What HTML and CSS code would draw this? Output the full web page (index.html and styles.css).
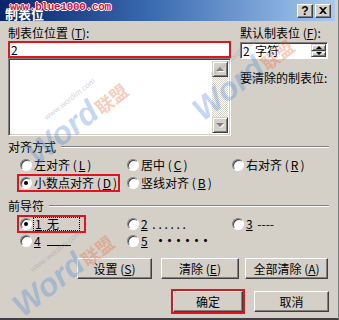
FILE: index.html
```html
<!DOCTYPE html>
<html>
<head>
    <title>制表位</title>
    <link rel="stylesheet" href="styles.css">
</head>
<body>
    <div class="window">
        <div class="titlebar">
            <span class="title">制表位</span>
            <span class="site">www.blue1000.com</span>
            <div class="caption">
                <span class="cbtn">?</span>
                <span class="cbtn">
                    <svg width="8" height="7" viewBox="0 0 8 7"><path d="M0 0h2l2 2 2-2h2L5 3.5 8 7H6L4 5 2 7H0l3-3.5z" fill="#000"/></svg>
                </span>
            </div>
        </div>

        <div class="content">
            <div class="top">
                <div class="col-left">
                    <div class="label">制表位位置 (<u>T</u>):</div>
                    <div class="field">2</div>
                    <div class="listbox">
                        <div class="scrollbar">
                            <span class="sbtn"><i class="arrow up"></i></span>
                            <span class="sbtn"><i class="arrow down"></i></span>
                        </div>
                    </div>
                </div>
                <div class="col-right">
                    <div class="label">默认制表位 (<u>F</u>):</div>
                    <div class="spin">
                        <span class="spin-text">2&nbsp; 字符</span>
                        <div class="spin-btns">
                            <span class="spin-btn"><i class="tiny up"></i></span>
                            <span class="spin-btn"><i class="tiny down"></i></span>
                        </div>
                    </div>
                    <div class="label clear-label">要清除的制表位:</div>
                </div>
            </div>

            <div class="group-head first"><span>对齐方式</span><i class="etch"></i></div>
            <div class="radios">
                <div class="radio"><span class="dot"></span>左对齐 (<u>L</u>)</div>
                <div class="radio"><span class="dot"></span>居中 (<u>C</u>)</div>
                <div class="radio"><span class="dot"></span>右对齐 (<u>R</u>)</div>
                <div class="radio marked"><span class="dot on"></span>小数点对齐 (<u>D</u>)</div>
                <div class="radio"><span class="dot"></span>竖线对齐 (<u>B</u>)</div>
            </div>

            <div class="group-head second"><span>前导符</span><i class="etch"></i></div>
            <div class="radios leaders">
                <div class="radio marked focus-item"><span class="dot on"></span><span class="focus"><u>1</u>&nbsp; 无</span></div>
                <div class="radio"><span class="dot"></span><u>2</u>&nbsp;. . . . . .</div>
                <div class="radio"><span class="dot"></span><u>3</u>&nbsp;----</div>
                <div class="radio"><span class="dot"></span><u>4</u>&nbsp;<span class="line"></span></div>
                <div class="radio"><span class="dot"></span><u>5</u>&nbsp;<b class="bold-dots">······</b></div>
            </div>

            <div class="btn-row">
                <span class="btn set">设置 (<u>S</u>)</span>
                <span class="btn clear">清除 (<u>E</u>)</span>
                <span class="btn clear-all">全部清除 (<u>A</u>)</span>
            </div>

            <div class="btn-row ok-row">
                <span class="btn ok">确定</span>
                <span class="btn cancel">取消</span>
            </div>
        </div>

        <!-- watermarks over the dialog -->
        <div class="wm wm1"><div class="wm-url">www.wordlm.com</div><span class="wm-word">Word</span><span class="wm-cn">联盟</span></div>
        <div class="wm wm2"><div class="wm-url">www.wordlm.com</div><span class="wm-word">Word</span><span class="wm-cn">联盟</span></div>
        <div class="wm wm3"><div class="wm-url">www.wordlm.com</div><span class="wm-word">Word</span><span class="wm-cn">联盟</span></div>
    </div>
</body>
</html>
```

FILE: styles.css
```css
* {
    box-sizing: border-box;
}

body {
    margin: 0;
    font-family: "Noto Sans CJK SC", "DejaVu Sans", sans-serif;
    font-size: 12px;
    color: #000;
}

u {
    text-decoration: underline;
    text-underline-offset: 1px;
}

.window {
    position: relative;
    width: 339px;
    height: 320px;
    background: #d4d0c8;
    padding: 0 3px 0 0;
    border-bottom: 2px solid #404040;
    border-right: 1px solid #808080;
    overflow: hidden;
}

/* title bar */
.titlebar {
    position: relative;
    height: 21px;
    display: flex;
    align-items: center;
    padding: 0 4px 0 5px;
    background: linear-gradient(to right, #0a246a, #3a6ab0 45%, #a6caf0);
}

.title {
    color: #fff;
    font-weight: bold;
    font-size: 13px;
    line-height: 13px;
    margin-top: 5px;
    text-shadow: 0 0 1px #0a246a;
}

/* site stamp printed over the caption */
.site {
    position: absolute;
    left: 10px;
    top: 1px;
    font: bold 11px "Liberation Mono", monospace;
    letter-spacing: -0.3px;
    color: #e0103a;
    text-shadow: 1px 0 #fff, -1px 0 #fff, 0 1px #fff, 0 -1px #fff;
}

.caption {
    margin-left: auto;
    display: flex;
    gap: 2px;
}

.cbtn {
    width: 16px;
    height: 14px;
    background: #d4d0c8;
    border: 1px solid;
    border-color: #fff #404040 #404040 #fff;
    box-shadow: inset -1px -1px #808080;
    display: flex;
    align-items: center;
    justify-content: center;
    font: bold 12px "Liberation Sans", sans-serif;
    line-height: 12px;
}

/* main area */
.content {
    padding: 6px 6px 0 8px;
}

.label {
    line-height: 12px;
    height: 12px;
    white-space: nowrap;
}

.top {
    display: flex;
    gap: 9px;
}

.col-left {
    width: 223px;
}

.col-right {
    width: 88px;
}

.field {
    margin-top: 2px;
    height: 17px;
    border: 2px solid #e0141e;
    background: #fff;
    padding-left: 1px;
    line-height: 13px;
}

.listbox {
    height: 78px;
    background: #fff;
    border: 1px solid;
    border-color: #808080 #fff #fff #808080;
    box-shadow: inset 1px 1px #404040, inset -1px -1px #d4d0c8;
    padding: 2px;
    display: flex;
    justify-content: flex-end;
}

.scrollbar {
    width: 16px;
    display: flex;
    flex-direction: column;
    justify-content: space-between;
    background: repeating-conic-gradient(#d4d0c8 0 25%, #fff 0 50%) 0 0 / 2px 2px;
}

.sbtn, .spin-btn {
    background: #d4d0c8;
    border: 1px solid;
    border-color: #d4d0c8 #404040 #404040 #d4d0c8;
    box-shadow: inset 1px 1px #fff, inset -1px -1px #808080;
    display: flex;
    align-items: center;
    justify-content: center;
}

.sbtn {
    height: 16px;
}

.arrow, .tiny {
    width: 0;
    height: 0;
    border-left: 4px solid transparent;
    border-right: 4px solid transparent;
}

.arrow.up {
    border-bottom: 4px solid #808080;
    filter: drop-shadow(1px 1px #fff);
}

.arrow.down {
    border-top: 4px solid #808080;
    filter: drop-shadow(1px 1px #fff);
}

.spin {
    margin-top: 3px;
    height: 17px;
    background: #fff;
    border: 1px solid;
    border-color: #808080 #fff #fff #808080;
    box-shadow: inset 1px 1px #404040;
    display: flex;
    align-items: center;
    padding: 1px 1px 1px 2px;
}

.spin-text {
    flex: 1;
    line-height: 12px;
}

.spin-btns {
    width: 15px;
    height: 100%;
    display: flex;
    flex-direction: column;
}

.spin-btn {
    flex: 1;
}

.tiny {
    border-left-width: 3px;
    border-right-width: 3px;
}

.tiny.up {
    border-bottom: 3px solid #000;
}

.tiny.down {
    border-top: 3px solid #000;
}

.clear-label {
    margin-top: 13px;
}

/* groups */
.group-head {
    display: flex;
    align-items: center;
    gap: 5px;
    height: 12px;
    line-height: 12px;
}

.group-head.first {
    margin-top: 5px;
}

.group-head.second {
    margin-top: 11px;
}

.etch {
    flex: 1;
    height: 2px;
    border-top: 1px solid #808080;
    border-bottom: 1px solid #fff;
}

.radios {
    display: grid;
    grid-template-columns: 107px 105px 1fr;
    row-gap: 6px;
    margin-top: 6px;
    padding-left: 12px;
}

.radios.leaders {
    row-gap: 5px;
}

.radio {
    justify-self: start;
    display: flex;
    align-items: center;
    gap: 2px;
    height: 12px;
    line-height: 12px;
    white-space: nowrap;
}

.dot {
    width: 12px;
    height: 12px;
    flex: none;
    border-radius: 50%;
    background: #fff;
    border: 1px solid;
    border-color: #808080 #fff #fff #808080;
    box-shadow: inset 1px 1px #404040, 0 0 0 0.5px #d4d0c8;
    display: flex;
    align-items: center;
    justify-content: center;
}

.dot.on::after {
    content: "";
    width: 4px;
    height: 4px;
    border-radius: 50%;
    background: #000;
}

.marked {
    outline: 2px solid #e0141e;
    outline-offset: 1px;
}

.focus-item {
    gap: 1px;
    padding-right: 3px;
}

.focus {
    width: 47px;
    height: 14px;
    margin: -1px 0;
    border: 1px dotted #000;
    padding-left: 1px;
    line-height: 12px;
}

.line {
    display: inline-block;
    width: 24px;
    height: 9px;
    border-bottom: 1px solid #000;
}

.bold-dots {
    letter-spacing: -3px;
    font-weight: bold;
}

/* buttons */
.btn-row {
    display: flex;
    justify-content: flex-end;
    margin-top: 11px;
    padding-right: 1px;
}

.btn {
    height: 21px;
    background: #d4d0c8;
    border: 1px solid;
    border-color: #fff #404040 #404040 #fff;
    box-shadow: inset -1px -1px #808080;
    display: flex;
    align-items: center;
    justify-content: center;
    line-height: 12px;
}

.set {
    width: 75px;
    margin-right: 9px;
}

.clear {
    width: 78px;
    margin-right: 6px;
}

.clear-all {
    width: 83px;
}

.ok-row {
    margin-top: 12px;
    padding-right: 0;
}

.ok {
    width: 70px;
    margin-right: 11px;
    outline: 2px solid #e0141e;
}

.cancel {
    width: 75px;
}

/* watermarks */
.wm {
    position: absolute;
    height: 42px;
    transform: rotate(-38deg);
    transform-origin: left bottom;
    white-space: nowrap;
    pointer-events: none;
}

.wm-url {
    font: 8px "Liberation Sans", sans-serif;
    color: rgba(140, 140, 160, 0.4);
    padding-left: 36px;
    line-height: 10px;
}

.wm-word {
    font: italic bold 32px "Liberation Sans", sans-serif;
    line-height: 32px;
    color: rgba(70, 130, 215, 0.32);
}

.wm-cn {
    font: bold 18px "Noto Sans CJK SC", sans-serif;
    color: rgba(235, 95, 40, 0.32);
    margin-left: 1px;
}

.wm1 {
    left: 40px;
    top: 128px;
}

.wm2 {
    left: 206px;
    top: 84px;
}

.wm3 {
    left: 26px;
    top: 280px;
}
```
